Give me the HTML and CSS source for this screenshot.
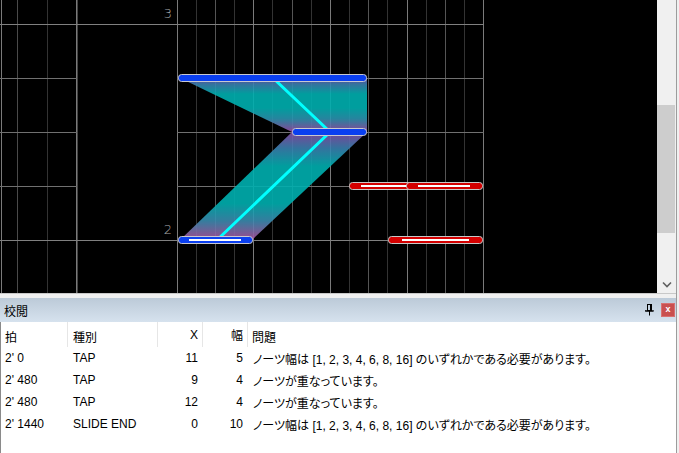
FILE: index.html
```html
<!DOCTYPE html>
<html lang="ja">
<head>
<meta charset="utf-8">
<title>校閲</title>
<link rel="stylesheet" href="styles.css">
</head>
<body>
<div class="app">
  <div class="editor">
    <svg class="canvas" width="657" height="293" viewBox="0 0 657 293" xmlns="http://www.w3.org/2000/svg">
      <defs>
        <linearGradient id="seg1" gradientUnits="userSpaceOnUse" x1="0" y1="240" x2="0" y2="132">
          <stop offset="0" stop-color="#b050a0"/>
          <stop offset="0.18" stop-color="#3a8cb0"/>
          <stop offset="0.34" stop-color="#00b0b0"/>
          <stop offset="0.68" stop-color="#00b0b0"/>
          <stop offset="0.85" stop-color="#3a80b0"/>
          <stop offset="1" stop-color="#8a4ca8"/>
        </linearGradient>
        <linearGradient id="seg2" gradientUnits="userSpaceOnUse" x1="0" y1="132" x2="0" y2="78">
          <stop offset="0" stop-color="#9a4ca8"/>
          <stop offset="0.25" stop-color="#2a94b0"/>
          <stop offset="0.45" stop-color="#00b0b0"/>
          <stop offset="0.7" stop-color="#00b0b0"/>
          <stop offset="0.88" stop-color="#3a80b0"/>
          <stop offset="1" stop-color="#6050b0"/>
        </linearGradient>
      </defs>
      <rect x="0" y="0" width="657" height="293" fill="#000"/>

      <!-- left columns -->
      <g stroke-width="1">
        <line x1="1.5" y1="0" x2="1.5" y2="293" stroke="#7a7a7a"/>
        <line x1="17.5" y1="0" x2="17.5" y2="293" stroke="#4a4a4a"/>
        <line x1="47.5" y1="0" x2="47.5" y2="293" stroke="#333"/>
        <line x1="76.5" y1="0" x2="76.5" y2="293" stroke="#7a7a7a"/>
        <line x1="77.5" y1="0" x2="77.5" y2="293" stroke="#444"/>
      </g>

      <!-- lane lines -->
      <g stroke-width="1">
        <line x1="177.5" y1="0" x2="177.5" y2="293" stroke="#7a7a7a"/>
        <line x1="196.5" y1="0" x2="196.5" y2="293" stroke="#333"/>
        <line x1="215.5" y1="0" x2="215.5" y2="293" stroke="#555"/>
        <line x1="234.5" y1="0" x2="234.5" y2="293" stroke="#333"/>
        <line x1="253.5" y1="0" x2="253.5" y2="293" stroke="#7a7a7a"/>
        <line x1="272.5" y1="0" x2="272.5" y2="293" stroke="#333"/>
        <line x1="292.5" y1="0" x2="292.5" y2="293" stroke="#555"/>
        <line x1="311.5" y1="0" x2="311.5" y2="293" stroke="#333"/>
        <line x1="330.5" y1="0" x2="330.5" y2="293" stroke="#7a7a7a"/>
        <line x1="349.5" y1="0" x2="349.5" y2="293" stroke="#333"/>
        <line x1="368.5" y1="0" x2="368.5" y2="293" stroke="#555"/>
        <line x1="387.5" y1="0" x2="387.5" y2="293" stroke="#333"/>
        <line x1="407.5" y1="0" x2="407.5" y2="293" stroke="#7a7a7a"/>
        <line x1="426.5" y1="0" x2="426.5" y2="293" stroke="#333"/>
        <line x1="445.5" y1="0" x2="445.5" y2="293" stroke="#555"/>
        <line x1="464.5" y1="0" x2="464.5" y2="293" stroke="#333"/>
        <line x1="483.5" y1="0" x2="483.5" y2="293" stroke="#7a7a7a"/>
      </g>

      <!-- bar / beat lines -->
      <g stroke="#707070" stroke-width="1">
        <line x1="0" y1="24.5" x2="484" y2="24.5" stroke="#808080"/>
        <line x1="0" y1="240.5" x2="484" y2="240.5" stroke="#808080"/>
        <line x1="0" y1="78.5" x2="77" y2="78.5"/>
        <line x1="177" y1="78.5" x2="484" y2="78.5"/>
        <line x1="0" y1="132.5" x2="77" y2="132.5"/>
        <line x1="177" y1="132.5" x2="484" y2="132.5"/>
        <line x1="0" y1="186.5" x2="77" y2="186.5"/>
        <line x1="177" y1="186.5" x2="484" y2="186.5"/>
      </g>

      <!-- measure numbers -->
      <text class="measure" x="172" y="18" text-anchor="end">3</text>
      <text class="measure" x="172" y="234" text-anchor="end">2</text>

      <!-- slide body -->
      <g opacity="0.9">
        <polygon points="180,240 252,240 367,132 292,132" fill="url(#seg1)"/>
        <polygon points="292,132 367,132 367,78 180,78" fill="url(#seg2)"/>
      </g>
      <polyline points="217,240 330,132 273,78" fill="none" stroke="#00ffff" stroke-width="3"/>

      <!-- slide notes -->
      <rect x="178.5" y="74.5" width="188" height="7" rx="3" fill="#0a3ff0" stroke="#c8c8d0"/>
      <rect x="292.5" y="128.5" width="74" height="7" rx="3" fill="#0a3ff0" stroke="#c8c8d0"/>
      <rect x="178.5" y="236.5" width="74" height="7" rx="3" fill="#0a3ff0" stroke="#c8c8d0"/>
      <rect x="189" y="239" width="52" height="2" fill="#ffffff"/>

      <!-- tap notes -->
      <rect x="349.5" y="182.5" width="75" height="7" rx="3" fill="#d40000" stroke="#c8c8c8"/>
      <rect x="361" y="185" width="52" height="2" fill="#ffffff"/>
      <rect x="406.5" y="182.5" width="76" height="7" rx="3" fill="#d40000" stroke="#c8c8c8"/>
      <rect x="418" y="185" width="52" height="2" fill="#ffffff"/>
      <rect x="388.5" y="236.5" width="94" height="7" rx="3" fill="#d40000" stroke="#c8c8c8"/>
      <rect x="402" y="239" width="67" height="2" fill="#ffffff"/>
    </svg>
    <div class="vscroll">
      <div class="track"></div>
      <div class="thumb"></div>
      <div class="track"></div>
      <div class="arrow">
        <svg width="10" height="7" viewBox="0 0 10 7"><polyline points="1,1.5 5,5.5 9,1.5" fill="none" stroke="#606060" stroke-width="1.6"/></svg>
      </div>
    </div>
  </div>

  <div class="panel">
    <div class="panel-title">
      <span class="title">校閲</span>
      <div class="tools">
        <svg class="pin" width="10" height="12" viewBox="0 0 10 12">
          <rect x="2.5" y="0.5" width="4" height="6" fill="none" stroke="#000"/>
          <rect x="5" y="1" width="1" height="5" fill="#000"/>
          <rect x="0.5" y="6.5" width="8" height="1" fill="#000" stroke="#000" stroke-width="0.5"/>
          <rect x="4" y="7" width="1" height="4.5" fill="#000"/>
        </svg>
        <div class="close"><span>x</span></div>
      </div>
    </div>
    <div class="grid">
      <div class="cell head">拍</div>
      <div class="cell head">種別</div>
      <div class="cell head num">X</div>
      <div class="cell head num">幅</div>
      <div class="cell head last">問題</div>

      <div class="cell">2' 0</div>
      <div class="cell">TAP</div>
      <div class="cell num">11</div>
      <div class="cell num">5</div>
      <div class="cell last">ノーツ幅は [1, 2, 3, 4, 6, 8, 16] のいずれかである必要があります。</div>

      <div class="cell">2' 480</div>
      <div class="cell">TAP</div>
      <div class="cell num">9</div>
      <div class="cell num">4</div>
      <div class="cell last">ノーツが重なっています。</div>

      <div class="cell">2' 480</div>
      <div class="cell">TAP</div>
      <div class="cell num">12</div>
      <div class="cell num">4</div>
      <div class="cell last">ノーツが重なっています。</div>

      <div class="cell">2' 1440</div>
      <div class="cell">SLIDE END</div>
      <div class="cell num">0</div>
      <div class="cell num">10</div>
      <div class="cell last">ノーツ幅は [1, 2, 3, 4, 6, 8, 16] のいずれかである必要があります。</div>
    </div>
  </div>
</div>
</body>
</html>
```
FILE: styles.css
```css
html, body {
  margin: 0;
  padding: 0;
}
body {
  background: #f0f0f0;
  font-family: "Liberation Sans", "Noto Sans CJK JP", sans-serif;
  font-size: 12px;
  color: #000;
  width: 679px;
  height: 453px;
  overflow: hidden;
  font-feature-settings: "palt";
}
.app {
  width: 676px;
  height: 453px;
  border-right: 1px solid #9c9c9c;
  display: flex;
  flex-direction: column;
}
.editor {
  display: flex;
  height: 293px;
  border-bottom: 1px solid #c8c8c8;
}
.canvas {
  display: block;
  flex: none;
}
.measure {
  fill: #a8a8a8;
  font-family: "DejaVu Sans", sans-serif;
  font-size: 13px;
  font-weight: 300;
}
.vscroll {
  width: 19px;
  background: #f0f0f0;
  display: flex;
  flex-direction: column;
}
.vscroll .track:first-child {
  height: 105px;
}
.thumb {
  height: 128px;
  margin: 0 1px 0 0;
  background: #cdcdcd;
}
.vscroll .track:nth-child(3) {
  flex: 1;
}
.arrow {
  height: 18px;
  display: flex;
  align-items: flex-start;
  justify-content: center;
}
.arrow svg {
  display: block;
  margin-top: 6px;
}
.panel {
  margin-top: 4px;
  flex: 1;
  display: flex;
  flex-direction: column;
}
.panel-title {
  height: 24px;
  background: linear-gradient(#bccad8, #d6e2ee);
  display: flex;
  align-items: center;
  justify-content: space-between;
  padding-left: 4px;
}
.title {
  font-size: 12px;
}
.tools {
  display: flex;
  align-items: center;
  gap: 6px;
  padding-right: 1px;
}
.pin {
  display: block;
}
.close {
  width: 12px;
  height: 12px;
  background: #c9504f;
  border: 1px solid #d87070;
  display: flex;
  align-items: center;
  justify-content: center;
  color: #fff;
  font-size: 9px;
  font-weight: bold;
  line-height: 1;
}
.close span {
  margin-top: -2px;
}
.grid {
  flex: 1;
  background: #fff;
  border-left: 1px solid #8a8a8a;
  display: grid;
  grid-template-columns: 67px 90px 45px 45px 1fr;
  grid-template-rows: 25px repeat(4, 22px) 1fr;
  align-content: start;
}
.cell {
  display: flex;
  align-items: center;
  padding: 0 4px;
  white-space: nowrap;
}
.cell.num {
  justify-content: flex-end;
  padding: 0 5px 0 0;
}
.cell.last {
  padding-left: 5px;
}
.cell:nth-child(5n+2) {
  padding-left: 5px;
}
.head {
  border-right: 1px solid #e6e6e6;
  padding-top: 3px;
}
.head.num {
  padding-right: 4px;
}
.head.last {
  border-right: none;
  padding-left: 4px;
}
```
